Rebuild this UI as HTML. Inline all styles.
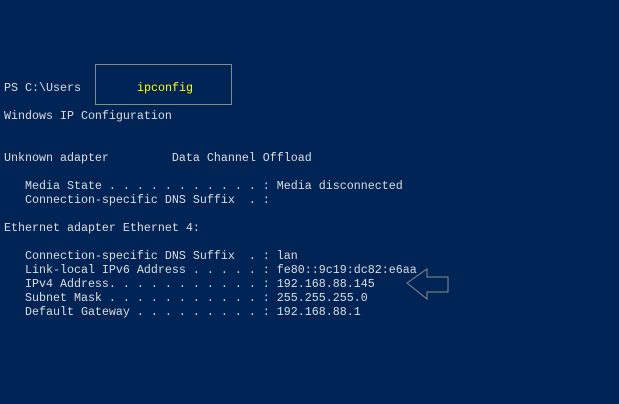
<!DOCTYPE html>
<html><head><style>
html,body{margin:0;padding:0;}
body{width:619px;height:404px;background:#012456;position:relative;overflow:hidden;font-family:"Liberation Mono",monospace;font-size:11.67px;color:#dcdcdc;}
.l{position:absolute;left:4px;white-space:pre;line-height:14px;height:14px;}
.box{position:absolute;left:95px;top:64px;width:135px;height:39px;border:1px solid #8a8a8a;}
.y{position:absolute;left:137px;top:81px;color:#ffff00;white-space:pre;line-height:14px;}
</style></head><body>
<div class="l" style="top:81px">PS C:\Users</div>
<div class="box"></div>
<div class="y">ipconfig</div>
<div class="l" style="top:109px">Windows IP Configuration</div>
<div class="l" style="top:151px">Unknown adapter         Data Channel Offload</div>
<div class="l" style="top:179px">   Media State . . . . . . . . . . . : Media disconnected</div>
<div class="l" style="top:193px">   Connection-specific DNS Suffix  . :</div>
<div class="l" style="top:221px">Ethernet adapter Ethernet 4:</div>
<div class="l" style="top:249px">   Connection-specific DNS Suffix  . : lan</div>
<div class="l" style="top:263px">   Link-local IPv6 Address . . . . . : fe80::9c19:dc82:e6aa</div>
<div class="l" style="top:277px">   IPv4 Address. . . . . . . . . . . : 192.168.88.145</div>
<div class="l" style="top:291px">   Subnet Mask . . . . . . . . . . . : 255.255.255.0</div>
<div class="l" style="top:305px">   Default Gateway . . . . . . . . . : 192.168.88.1</div>
<svg style="position:absolute;left:0;top:0" width="619" height="404">
<polygon points="407,283 427,269 427,277 448,277 448,292 427,292 427,299" fill="none" stroke="#8a8a8a" stroke-width="1"/>
</svg>
</body></html>
